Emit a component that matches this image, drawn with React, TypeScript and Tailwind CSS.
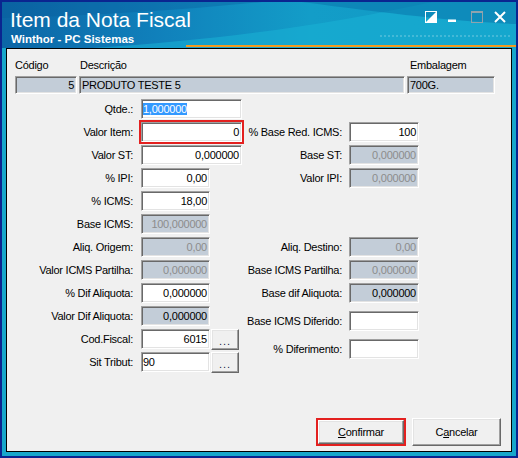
import React from 'react';

const font = "font-['Liberation_Sans',Arial,sans-serif]";
const sunken =
  'border border-t-[#a0a0a0] border-l-[#a0a0a0] border-r-white border-b-white shadow-[inset_1px_1px_0_#696969,inset_-1px_-1px_0_#e3e3e3]';
const raised =
  'bg-[#f0f0f0] border border-t-white border-l-white border-r-[#696969] border-b-[#696969] shadow-[inset_-1px_-1px_0_#a0a0a0,inset_1px_1px_0_#e3e3e3]';

interface FieldProps {
  value?: string;
  w: string;
  gray?: boolean;
  dim?: boolean;
  left?: boolean;
  selected?: boolean;
  mark?: boolean;
}

const Field: React.FC<FieldProps> = ({ value = '', w, gray, dim, left, selected, mark }) => (
  <div
    className={`${w} h-[20px] flex items-center px-[2px] ${sunken} ${gray ? 'bg-[#c3cdd8]' : 'bg-white'} ${
      left ? 'justify-start pl-[1px]' : 'justify-end'
    } ${dim ? 'text-[#8c8c8c]' : 'text-black'} ${mark ? 'ring-2 ring-[#e3201f]' : ''}`}
  >
    {selected ? (
      <span className="bg-[#3399ff] text-white leading-[12px]">{value}</span>
    ) : (
      <span>{value}</span>
    )}
  </div>
);

const DotsButton = () => (
  <button className={`ml-[1px] w-[28px] h-[21px] flex items-center justify-center text-[#1a1a4a] ${raised}`}>
    <span className="leading-none pt-[4px] tracking-[1px]">...</span>
  </button>
);

interface RowProps extends FieldProps {
  label: string;
  dots?: boolean;
}

const LeftRow: React.FC<RowProps> = ({ label, dots, ...field }) => (
  <div className="flex items-center h-[20px]">
    <span className="w-[126px] text-right whitespace-nowrap">{label}</span>
    <div className="ml-[8px]">
      <Field {...field} />
    </div>
    {dots && <DotsButton />}
  </div>
);

const RightRow: React.FC<RowProps & { mt: string }> = ({ label, mt, ...field }) => (
  <div className={`flex items-center h-[20px] ${mt}`}>
    <span className="w-[99px] text-right whitespace-nowrap">{label}</span>
    <div className="ml-[7px]">
      <Field {...field} />
    </div>
  </div>
);

const leftRows: RowProps[] = [
  { label: 'Qtde.:', value: '1,000000', w: 'w-[101px]', left: true, selected: true },
  { label: 'Valor Item:', value: '0', w: 'w-[101px]', mark: true },
  { label: 'Valor ST:', value: '0,000000', w: 'w-[101px]' },
  { label: '% IPI:', value: '0,00', w: 'w-[69px]' },
  { label: '% ICMS:', value: '18,00', w: 'w-[69px]' },
  { label: 'Base ICMS:', value: '100,000000', w: 'w-[69px]', gray: true, dim: true },
  { label: 'Aliq. Origem:', value: '0,00', w: 'w-[69px]', gray: true, dim: true },
  { label: 'Valor ICMS Partilha:', value: '0,000000', w: 'w-[69px]', gray: true, dim: true },
  { label: '% Dif Aliquota:', value: '0,000000', w: 'w-[69px]' },
  { label: 'Valor Dif Aliquota:', value: '0,000000', w: 'w-[69px]', gray: true },
  { label: 'Cod.Fiscal:', value: '6015', w: 'w-[69px]', dots: true },
  { label: 'Sit Tribut:', value: '90', w: 'w-[69px]', left: true, dots: true },
];

const TitleIcons = () => (
  <div className="ml-auto mt-[2px] mr-[10px] flex gap-[11px]">
    <svg width="12" height="12" viewBox="0 0 12 12">
      <rect x="0.5" y="0.5" width="11" height="11" fill="none" stroke="#fff" />
      <path d="M11.5 0.5 L11.5 11.5 L0.5 11.5 Z" fill="#fff" />
    </svg>
    <svg width="12" height="12" viewBox="0 0 12 12">
      <rect x="0" y="8.5" width="8" height="2.5" fill="#fff" />
    </svg>
    <svg width="12" height="12" viewBox="0 0 12 12">
      <rect x="0.5" y="0.5" width="11" height="11" fill="none" stroke="#8fa3ad" />
      <rect x="0" y="0" width="12" height="2" fill="#8fa3ad" />
    </svg>
    <svg width="12" height="12" viewBox="0 0 12 12">
      <path d="M1 1 L11 11 M11 1 L1 11" stroke="#fff" strokeWidth="2" />
    </svg>
  </div>
);

export default function App() {
  return (
    <div className={`w-[518px] h-[458px] bg-[#0a2590] p-[2px] flex ${font} text-[11px] tracking-[-0.25px] text-black`}>
      <div className="flex-1 flex flex-col bg-[#17a7cb]">
        {/* Title bar */}
        <div className="relative h-[46px] shrink-0 overflow-hidden bg-[linear-gradient(90deg,#0c66a6_0%,#1080bb_30%,#139dc8_60%,#1199c4_100%)]">
          <svg className="absolute inset-0" width="514" height="46" viewBox="0 0 514 46">
            <path d="M90 46 C220 38 330 22 430 0 L514 0 L514 46 Z" fill="#1ab2d5" opacity="0.55" />
            <path d="M300 0 C390 12 460 20 514 22 L514 0 Z" fill="#0a74ab" opacity="0.55" />
            <path d="M0 0 L260 0 C180 8 90 14 0 16 Z" fill="#0a5c9c" opacity="0.35" />
          </svg>
          <div className="absolute left-[378px] right-[6px] top-[33px] h-0 border-t-2 border-dotted border-white/20" />
          <div className="relative flex pl-[8px] pt-[7px] tracking-normal">
            <div className="text-white">
              <div className="text-[21px] leading-none">Item da Nota Fiscal</div>
              <div className="mt-[4px] ml-[1px] text-[11.5px] font-bold leading-none">Winthor - PC Sistemas</div>
            </div>
            <TitleIcons />
          </div>
          <div className="absolute left-[184px] right-0 bottom-[1px] h-[2px] bg-[#f39a1f]" />
        </div>

        {/* Body */}
        <div className="flex-1 flex px-[4px] pb-[4px]">
          <div className="flex-1 flex flex-col border border-black bg-[#f0f0f0]">
            <div className="grid grid-cols-[62px_326px_88px] gap-x-[2px] gap-y-[4px] pl-[8px] pt-[10px]">
              <span className="leading-[13px]">Código</span>
              <span className="leading-[13px] pl-[1px]">Descrição</span>
              <span className="leading-[13px] pl-[3px]">Embalagem</span>
              <div className={`h-[18px] flex items-center justify-end px-[2px] bg-[#c3cdd8] ${sunken}`}>5</div>
              <div className={`h-[18px] flex items-center px-[2px] bg-[#c3cdd8] ${sunken}`}>PRODUTO TESTE 5</div>
              <div className={`h-[18px] flex items-center px-[2px] bg-[#c3cdd8] ${sunken}`}>700G.</div>
            </div>

            <div className="flex mt-[5px]">
              <div className="w-[236px] flex flex-col gap-[3px]">
                {leftRows.map((r) => (
                  <LeftRow key={r.label} {...r} />
                ))}
              </div>
              <div className="flex flex-col">
                <RightRow mt="mt-[23px]" label="% Base Red. ICMS:" value="100" w="w-[70px]" />
                <RightRow mt="mt-[3px]" label="Base ST:" value="0,000000" w="w-[70px]" gray dim />
                <RightRow mt="mt-[3px]" label="Valor IPI:" value="0,000000" w="w-[70px]" gray dim />
                <RightRow mt="mt-[49px]" label="Aliq. Destino:" value="0,00" w="w-[70px]" gray dim />
                <RightRow mt="mt-[3px]" label="Base ICMS Partilha:" value="0,000000" w="w-[70px]" gray dim />
                <RightRow mt="mt-[3px]" label="Base dif Aliquota:" value="0,000000" w="w-[70px]" gray />
                <RightRow mt="mt-[8px]" label="Base ICMS Diferido:" w="w-[70px]" />
                <RightRow mt="mt-[8px]" label="% Diferimento:" w="w-[70px]" />
              </div>
            </div>

            <div className="mt-auto flex justify-end items-end gap-[6px] pr-[10px] pb-[5px]">
              <div className="w-[90px] h-[28px] border-2 border-[#e3201f] flex">
                <button className={`flex-1 ${raised}`}>
                  <span className="underline">C</span>onfirmar
                </button>
              </div>
              <button className={`w-[89px] h-[28px] ${raised}`}>
                C<span className="underline">a</span>ncelar
              </button>
            </div>
          </div>
        </div>
      </div>
    </div>
  );
}
